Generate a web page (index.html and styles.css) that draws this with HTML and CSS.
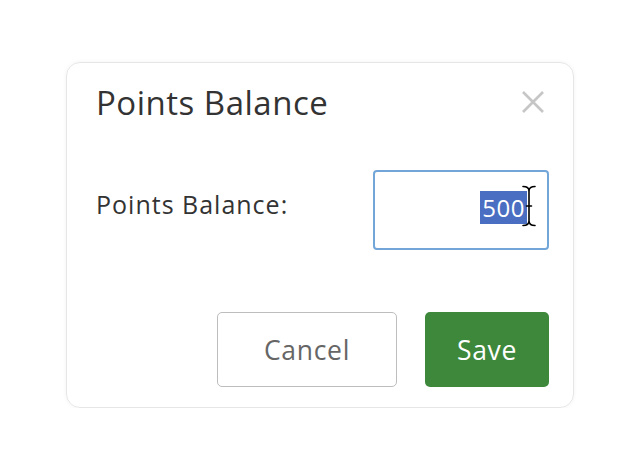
FILE: index.html
```html
<!DOCTYPE html>
<html lang="en">
<head>
<meta charset="utf-8">
<title>Points Balance</title>
<link rel="stylesheet" href="styles.css">
</head>
<body>
<div class="dialog">
  <div class="dialog-header">
    <h1 class="dialog-title">Points Balance</h1>
    <button class="close-btn" aria-label="Close">
      <svg width="22" height="22" viewBox="0 0 22 22"><path d="M1 1 L21 21 M21 1 L1 21" stroke="#c6c6c6" stroke-width="2.6" fill="none"/></svg>
    </button>
  </div>
  <div class="field-row">
    <label class="field-label">Points Balance:</label>
    <div class="field-input">
      <span class="selected">500</span>
      <svg class="ibeam" width="18" height="42" viewBox="0 0 18 42"><path d="M3 1.5 Q9 1.5 9 6 Q9 1.5 15 1.5 M9 6 V36 M3 40.5 Q9 40.5 9 36 Q9 40.5 15 40.5 M6.5 21 H11.5" stroke="#000" stroke-width="1.6" fill="none" stroke-linecap="round"/></svg>
    </div>
  </div>
  <div class="dialog-footer">
    <button class="btn btn-cancel">Cancel</button>
    <button class="btn btn-save">Save</button>
  </div>
</div>
</body>
</html>
```
FILE: styles.css
```css
html, body {
  margin: 0;
  padding: 0;
  background: #ffffff;
}
body {
  font-family: "Open Sans", Lato, sans-serif;
  color: #333333;
  padding: 62px 0 0 66px;
}
.dialog {
  box-sizing: border-box;
  width: 508px;
  height: 346px;
  border: 1px solid #e6e6e6;
  border-radius: 14px;
  box-shadow: 0 0 4px rgba(0, 0, 0, 0.05);
  padding: 20px 24px 20px 29px;
  display: flex;
  flex-direction: column;
}
.dialog-header {
  display: flex;
  justify-content: space-between;
  align-items: flex-start;
  height: 41px;
}
.dialog-title {
  margin: 0;
  font-size: 33px;
  font-weight: 400;
  letter-spacing: 0.5px;
  line-height: 40px;
  color: #333333;
}
.close-btn {
  margin: 8px 5px 0 0;
  padding: 0;
  border: 0;
  background: none;
  width: 22px;
  height: 22px;
  display: block;
}
.close-btn svg { display: block; }
.field-row {
  margin-top: 46px;
  display: flex;
  justify-content: space-between;
  align-items: flex-start;
}
.field-label {
  margin-top: 20px;
  font-size: 25px;
  letter-spacing: 1px;
  line-height: 28px;
  color: #333333;
}
.field-input {
  position: relative;
  box-sizing: border-box;
  width: 176px;
  height: 80px;
  border: 2px solid #72a6d9;
  border-radius: 4px;
  display: flex;
  justify-content: flex-end;
  align-items: center;
  padding-right: 20px;
}
.selected {
  background: #4a6fc2;
  color: #ffffff;
  font-size: 24px;
  letter-spacing: 0.5px;
  line-height: 33px;
  padding: 0 2px 0 2px;
  margin-top: -6px;
}
.ibeam {
  position: absolute;
  right: 9px;
  top: 13px;
}
.dialog-footer {
  margin-top: 62px;
  display: flex;
  justify-content: flex-end;
  gap: 28px;
}
.btn {
  box-sizing: border-box;
  height: 75px;
  border-radius: 5px;
  font-family: "Open Sans", Lato, sans-serif;
  font-size: 26.5px;
  letter-spacing: 0.7px;
  padding: 0;
}
.btn-cancel {
  width: 180px;
  background: #ffffff;
  border: 1.5px solid #bdbdbd;
  color: #666666;
}
.btn-save {
  width: 124px;
  background: #3e883b;
  border: 0;
  color: #ffffff;
}
```
